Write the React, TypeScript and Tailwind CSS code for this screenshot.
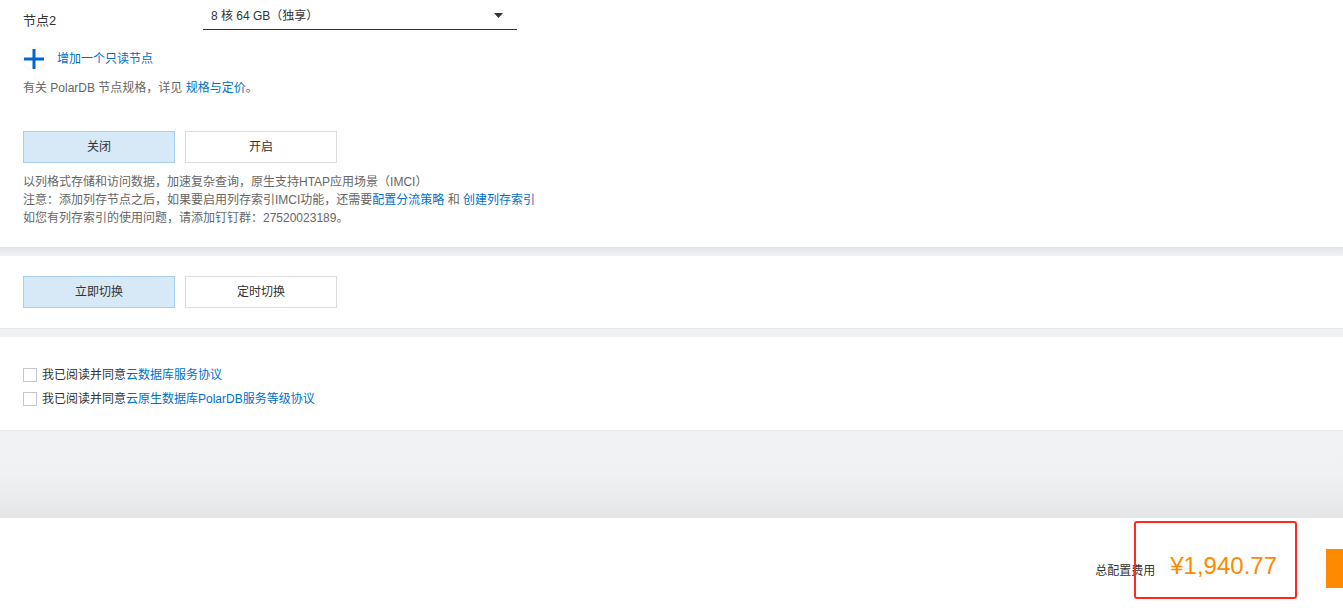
const font = { fontFamily: '"Liberation Sans", "Noto Sans CJK SC", sans-serif' };

const Choice = ({ label, active }: { label: string; active?: boolean }) => (
  <div
    className={`w-[152px] h-[32px] flex items-center justify-center text-[12px] text-[#333] border ${
      active ? "bg-[#d7e8f6] border-[#a8ceee]" : "bg-white border-[#dcdcdc]"
    }`}
  >
    {label}
  </div>
);

const Check = ({ children }: { children: React.ReactNode }) => (
  <div className="flex items-center h-[24px] gap-[5px]">
    <span className="w-[14px] h-[14px] border border-[#c4c6cc] bg-white shrink-0" />
    <span className="text-[12px] text-[#333]">{children}</span>
  </div>
);

export default function App() {
  return (
    <div className="w-[1343px] h-[615px] overflow-hidden bg-white flex flex-col" style={font}>
      {/* node spec section */}
      <div className="h-[247px] pl-[23px] shrink-0">
        <div className="flex">
          <div className="w-[180px] pt-[11px] text-[13px] text-[#333]">节点2</div>
          <div className="w-[314px] h-[30px] border-b border-[#333] flex items-center justify-between pl-[8px] pr-[14px] pt-[2px]">
            <span className="text-[12px] text-[#333]">8 核 64 GB（独享）</span>
            <svg width="9" height="5" viewBox="0 0 9 5">
              <path d="M0 0h9L4.5 5z" fill="#333" />
            </svg>
          </div>
        </div>
        <div className="flex items-center gap-[12px] mt-[17px] h-[22px]">
          <span className="w-[22px] h-[22px] rounded-full bg-white shadow-[0_0_3px_rgba(0,0,0,0.08)] flex items-center justify-center">
            <svg width="22" height="22" viewBox="0 0 22 22">
              <path d="M11 1v20M1 11h20" stroke="#0068c8" strokeWidth="3" />
            </svg>
          </span>
          <span className="text-[12px] text-[#0070cc]">增加一个只读节点</span>
        </div>
        <div className="mt-[9px] text-[12px] leading-[18px] text-[#666]">
          有关 PolarDB 节点规格，详见 <span className="text-[#0070cc]">规格与定价</span>。
        </div>
        <div className="flex gap-[10px] mt-[34px]">
          <Choice label="关闭" active />
          <Choice label="开启" />
        </div>
        <div className="mt-[10px] text-[12px] leading-[18px] text-[#666]">
          <div>以列格式存储和访问数据，加速复杂查询，原生支持HTAP应用场景（IMCI）</div>
          <div>
            注意：添加列存节点之后，如果要启用列存索引IMCI功能，还需要
            <span className="text-[#0070cc]">配置分流策略</span> 和{" "}
            <span className="text-[#0070cc]">创建列存索引</span>
          </div>
          <div>如您有列存索引的使用问题，请添加钉钉群：27520023189。</div>
        </div>
      </div>

      <div className="h-[9px] shrink-0 bg-gradient-to-b from-[#e3e4e7] to-[#f1f2f4]" />

      {/* switch mode section */}
      <div className="h-[72px] shrink-0 pl-[23px] flex items-center gap-[10px]">
        <Choice label="立即切换" active />
        <Choice label="定时切换" />
      </div>

      <div className="h-[9px] shrink-0 bg-[#f0f1f3] border-t border-[#e8e9eb]" />

      {/* agreements */}
      <div className="h-[93px] shrink-0 pl-[23px] pt-[26px]">
        <Check>
          我已阅读并同意<span className="text-[#0070cc]">云数据库服务协议</span>
        </Check>
        <Check>
          我已阅读并同意<span className="text-[#0070cc]">云原生数据库PolarDB服务等级协议</span>
        </Check>
      </div>

      <div className="h-[88px] shrink-0 border-t border-[#e8e9eb] bg-gradient-to-b from-[#f1f2f4] via-[#f0f1f3] to-[#e5e6e8]" />

      {/* price bar */}
      <div className="relative flex-1 flex items-center justify-end">
        <div className="flex items-end gap-[15px] mt-[-1px]">
          <span className="text-[12px] text-[#333]">总配置费用</span>
          <span className="text-[24px] leading-[28px] text-[#ff8a00]">¥1,940.77</span>
        </div>
        <div className="w-[49px] shrink-0" />
        <div className="w-[17px] h-[39px] bg-[#ff8a00] shrink-0 mt-[4px]" />
        <div className="absolute left-[1134px] top-[3px] w-[163px] h-[78px] border-2 border-[#ff2a1f] rounded-[3px]" />
      </div>
    </div>
  );
}
